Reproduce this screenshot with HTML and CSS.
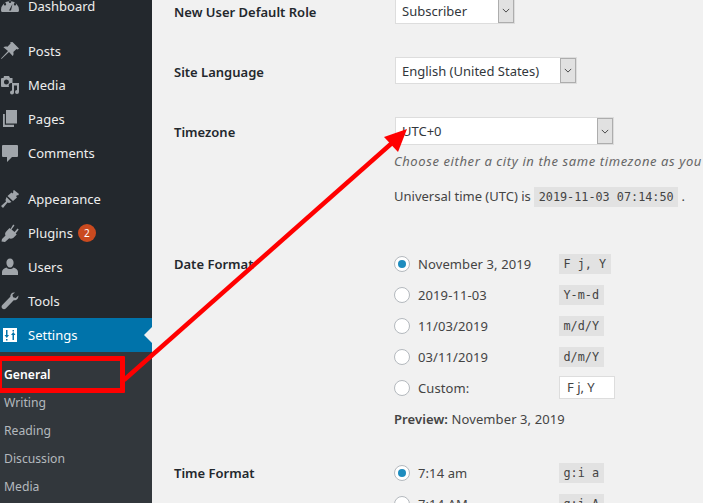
FILE: index.html
```html
<!DOCTYPE html>
<html lang="en">
<head>
<meta charset="utf-8">
<title>General Settings</title>
<link rel="stylesheet" href="styles.css">
</head>
<body>
<div class="page">
  <nav class="sidebar">
    <ul class="menu">
      <li class="item"><svg class="ico" viewBox="0 0 20 20"><path d="M1 14a9 9 0 1 1 18 0c0 1-.5 2-1 2H2c-.5 0-1-1-1-2zM10 7a1.2 1.2 0 1 0 0-2.400a1.200 1.200 0 0 0 0 2.400zM5 9.500a1.200 1.200 0 1 0 0-2.400a1.200 1.200 0 0 0 0 2.400zM15 9.500a1.200 1.200 0 1 0 0-2.400a1.200 1.200 0 0 0 0 2.400zM9 14.500h2l1.500-6.500z" fill-rule="evenodd"/></svg>Dashboard</li>
      <li class="sep first"></li>
      <li class="item"><svg class="ico" viewBox="0 0 20 20"><path d="M12.500 1l6.500 6.500-1.200.9-1.300-.5-3.200 3.200c.5 1.500.3 3-.6 4L9 11l-7.500 7L1 17.500l7-7.500-4.600-3.700c1-.9 2.500-1.100 4-.6l3.200-3.200-.4-1.300z"/></svg>Posts</li>
      <li class="item"><svg class="ico" viewBox="0 0 20 20"><path d="M4 1h5l1 2h2.500v5H11a3 3 0 0 0-2 4H2a1 1 0 0 1-1-1V4a1 1 0 0 1 1-1h1.500zM6.500 4.500a2.500 2.500 0 1 0 0 5a2.500 2.500 0 0 0 0-5zM12 8h7v9a2 2 0 1 1-2-2v-4.500h-3v7a2 2 0 1 1-2-2z" fill-rule="evenodd"/></svg>Media</li>
      <li class="item"><svg class="ico" viewBox="0 0 20 20"><path d="M6 1h11v13.500H6zM3 5h1.800v10.800H14V18H3z"/></svg>Pages</li>
      <li class="item"><svg class="ico" viewBox="0 0 20 20"><path d="M3 2h14a1 1 0 0 1 1 1v10a1 1 0 0 1-1 1h-5l-5 5v-5H3a1 1 0 0 1-1-1V3a1 1 0 0 1 1-1z"/></svg>Comments</li>
      <li class="sep"></li>
      <li class="item"><svg class="ico" viewBox="0 0 20 20"><path d="M14 1l5 4-1 1.500-1-.5-.8 1.500L17 8.500 13 12 7.500 7l4-3.500 1 1L13.500 3 13 2zM6.500 8l5 5-2.500 1-1.500-.5L3 19 1 17l5-4.500L5.500 11z"/></svg>Appearance</li>
      <li class="item"><svg class="ico" viewBox="0 0 20 20"><path d="M13.200 1.500l1.300 1-3 4 3 2.500 3-3.500 1.200 1-3 4 1 1-3.500 3.500c-1.500 1-3 1-4 .3L5 19l-3.500-.5L2 16l3.500-3.500c-.7-1.300-.5-2.800.7-4L9.500 5l1 1z"/></svg><span>Plugins</span><span class="badge">2</span></li>
      <li class="item"><svg class="ico" viewBox="0 0 20 20"><path d="M10 1.500c2.200 0 3.600 1.800 3.600 4.200S12.200 10.500 10 10.500 6.400 8.100 6.400 5.700 7.800 1.500 10 1.500zM6.500 10.500c1 1 2.200 1.500 3.500 1.500s2.500-.5 3.500-1.500c2.500.6 4.500 2.300 4.500 4.500v3H2v-3c0-2.200 2-3.900 4.500-4.500z"/></svg>Users</li>
      <li class="item"><svg class="ico" viewBox="0 0 20 20"><path d="M15 1.500c-2.800-.6-5 1.600-4.700 4.300L2.300 14c-1 1-.9 2.500 0 3.500s2.500 1 3.500 0l7.900-8.200c2.800.5 5-1.900 4.700-4.800l-2.600 2.600-2.700-.8-.7-2.600z"/></svg>Tools</li>
      <li class="item current"><svg class="ico" viewBox="0 0 20 20"><path d="M3 3h14v14H3zM6 5v5H4.500l2.300 3 2.200-3H7.500V5zM12.500 15v-5H11l2.300-3 2.200 3H14v5zM6 14v1.500h1.500V14zM12.500 5v1.500H14V5z" fill-rule="evenodd"/></svg>Settings</li>
    </ul>
    <ul class="submenu">
      <li class="sub active">General</li>
      <li class="sub">Writing</li>
      <li class="sub">Reading</li>
      <li class="sub">Discussion</li>
      <li class="sub">Media</li>
    </ul>
  </nav>
  <main class="content">
    <div class="row role">
      <div class="label">New User Default Role</div>
      <div class="select w-role"><span class="value">Subscriber</span><span class="caret"><svg viewBox="0 0 10 6"><path d="M1 1l4 4 4-4"/></svg></span></div>
    </div>
    <div class="row lang">
      <div class="label">Site Language</div>
      <div class="select w-lang"><span class="value">English (United States)</span><span class="caret"><svg viewBox="0 0 10 6"><path d="M1 1l4 4 4-4"/></svg></span></div>
    </div>
    <div class="row tz">
      <div class="label">Timezone</div>
      <div class="field">
        <div class="select w-tz"><span class="value">UTC+0</span><span class="caret"><svg viewBox="0 0 10 6"><path d="M1 1l4 4 4-4"/></svg></span></div>
        <p class="hint">Choose either a city in the same timezone as you</p>
        <p class="utc">Universal time (UTC) is <code class="code">2019-11-03 07:14:50</code> .</p>
      </div>
    </div>
    <div class="row date">
      <div class="label">Date Format</div>
      <div class="field">
        <div class="opt"><span class="radio on"></span><span class="opt-text">November 3, 2019</span><code class="code">F j, Y</code></div>
        <div class="opt"><span class="radio"></span><span class="opt-text">2019-11-03</span><code class="code">Y-m-d</code></div>
        <div class="opt"><span class="radio"></span><span class="opt-text">11/03/2019</span><code class="code">m/d/Y</code></div>
        <div class="opt"><span class="radio"></span><span class="opt-text">03/11/2019</span><code class="code">d/m/Y</code></div>
        <div class="opt"><span class="radio"></span><span class="opt-text">Custom:</span><span class="custom">F j, Y</span></div>
        <p class="preview"><b>Preview:</b> November 3, 2019</p>
      </div>
    </div>
    <div class="row time">
      <div class="label">Time Format</div>
      <div class="field">
        <div class="opt"><span class="radio on"></span><span class="opt-text">7:14 am</span><code class="code">g:i a</code></div>
        <div class="opt"><span class="radio"></span><span class="opt-text">7:14 AM</span><code class="code">g:i A</code></div>
      </div>
    </div>
  </main>
</div>
<div class="callout-box"></div>
<svg class="callout-arrow" viewBox="0 0 703 503"><path d="M124 380L392 143" /><polygon points="407,129 384,137 398,152"/></svg>
</body>
</html>
```
FILE: styles.css
```css
* { box-sizing: border-box; }
html, body { margin: 0; height: 100%; overflow: hidden; }
body { background: #f1f1f1; font-family: "Noto Sans", "Open Sans", sans-serif; font-size: 13px; color: #444; position: relative; }
ul { list-style: none; margin: 0; padding: 0; }
p { margin: 0; }

.page { display: flex; align-items: flex-start; margin-top: -11px; min-height: 560px; }

.sidebar { width: 152px; flex: none; background: #23282d; color: #eee; }
.item { height: 34px; display: flex; align-items: center; position: relative; line-height: 1; }
.ico { width: 20px; height: 20px; margin-right: 8px; fill: #a0a5aa; flex: none; }
.sep { height: 12px; }
.sep.first { height: 11px; }
.badge { margin-left: 5px; width: 18px; height: 18px; border-radius: 50%; background: #ca4a1f; color: #fff; font-size: 10px; display: flex; align-items: center; justify-content: center; }
.current { background: #0073aa; color: #fff; }
.current .ico { fill: #fff; }
.current::after { content: ""; position: absolute; right: 0; top: 9px; border: 8px solid transparent; border-right-color: #f1f1f1; }
.submenu { background: #32373c; padding: 9px 0 6px; }
.sub { height: 28px; line-height: 28px; padding-left: 4px; color: #b4b9be; font-size: 12.2px; }
.active { color: #fff; font-weight: 600; }

.content { flex: 1; min-width: 0; padding-left: 22px; display: flex; flex-direction: column; white-space: nowrap; }
.row { display: flex; align-items: flex-start; }
.label { width: 220px; flex: none; font-size: 13px; font-weight: 600; color: #23282d; line-height: 20px; }
.field { min-width: 0; flex: none; }

.role { margin-top: 8px; height: 60px; }
.role .label { margin-top: 5px; }
.lang { height: 60px; }
.lang .label { margin-top: 5px; }
.tz { height: 131px; }
.tz .label { margin-top: 5px; }
.date { height: 209px; }
.date .label { margin-top: 6px; }
.time .label { margin-top: 6px; }

.select { height: 27px; margin-left: 1px; display: flex; background: #fff; border: 1px solid #ddd; font-size: 13px; color: #32373c; align-items: stretch; }
.value { flex: 1; padding-left: 6px; line-height: 26px; }
.caret { width: 16px; background: #e1e1e1; border: 1px solid #adadad; display: flex; align-items: center; justify-content: center; }
.caret svg { width: 8px; height: 5px; fill: none; stroke: #444; stroke-width: 1.200; }
.w-role { width: 120px; }
.w-lang { width: 182px; }
.w-tz { width: 219px; height: 28px; }

.hint { margin-top: 6px; font-style: italic; color: #666; line-height: 20px; letter-spacing: .6px; }
.utc { margin-top: 14px; line-height: 22px; }
.code { font-family: "DejaVu Sans Mono", "Liberation Mono", monospace; font-size: 11.8px; background: #e2e2e2; color: #444; padding: 3px 4.5px; }

.opt { height: 31px; display: flex; align-items: center; }
.radio { width: 16px; height: 16px; border-radius: 50%; border: 1px solid #b4b9be; background: #fff; flex: none; margin-right: 8px; display: flex; align-items: center; justify-content: center; }
.on::before { content: ""; width: 8px; height: 8px; border-radius: 50%; background: #1e8cbe; }
.opt-text { width: 141px; flex: none; letter-spacing: .1px; }
.custom { width: 56px; height: 23px; border: 1px solid #ddd; background: #fff; padding-left: 7px; line-height: 21px; }
.preview { margin-top: 1px; line-height: 31px; letter-spacing: .1px; }
.preview b { font-weight: 600; }

.callout-box { position: absolute; left: -3px; top: 356px; width: 128px; height: 37px; border: 5px solid #f00; border-radius: 1px; }
.callout-arrow { position: absolute; left: 0; top: 0; width: 703px; height: 503px; pointer-events: none; }
.callout-arrow path { stroke: #f00; stroke-width: 4.500; fill: none; }
.callout-arrow polygon { fill: #f00; }
```
